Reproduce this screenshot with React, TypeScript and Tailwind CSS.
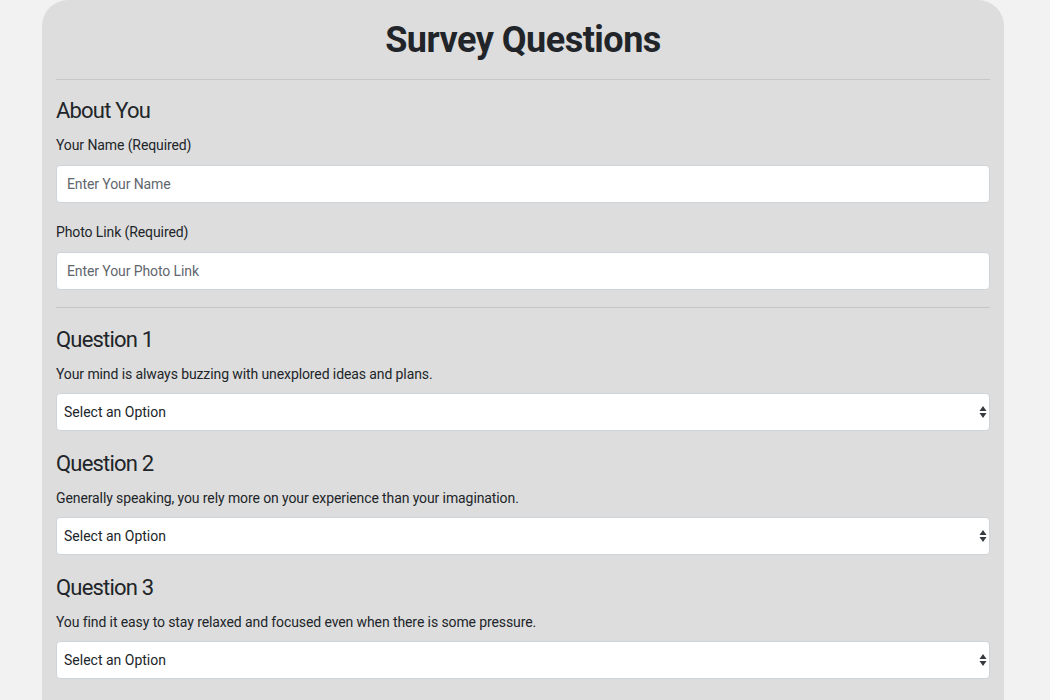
import React from "react";

const questions = [
  { title: "Question 1", text: "Your mind is always buzzing with unexplored ideas and plans." },
  { title: "Question 2", text: "Generally speaking, you rely more on your experience than your imagination." },
  { title: "Question 3", text: "You find it easy to stay relaxed and focused even when there is some pressure." },
];

function SelectArrows() {
  return (
    <svg width="8" height="14" viewBox="0 0 8 14" className="shrink-0">
      <path d="M4 1 L7.5 6 L0.5 6 Z" fill="#343a40" />
      <path d="M4 13 L7.5 8 L0.5 8 Z" fill="#343a40" />
    </svg>
  );
}

export default function App() {
  return (
    <div className="h-[700px] overflow-hidden bg-[#f2f2f2] font-['Roboto',sans-serif] text-[#212529]">
      <div className="ml-[42px] w-[962px] rounded-[26px] bg-[#dddddd] px-[14px] pb-16">
        <h1 className="flex h-[79px] items-center justify-center text-[36px] font-bold tracking-[-0.5px]">
          Survey Questions
        </h1>
        <div className="border-t border-[#c6c6c6]" />

        <h2 className="mt-[17px] text-[22px] leading-[28px] tracking-[-0.8px]">About You</h2>
        <label className="mt-[10px] block text-[14px] leading-[20px] tracking-[-0.1px]">Your Name (Required)</label>
        <input
          placeholder="Enter Your Name"
          className="mt-[10px] block h-[38px] w-full rounded-[4px] border border-[#ced4da] bg-white px-[10px] text-[14px] tracking-[-0.1px] placeholder:text-[#5f666d] outline-none"
        />
        <label className="mt-[19px] block text-[14px] leading-[20px] tracking-[-0.1px]">Photo Link (Required)</label>
        <input
          placeholder="Enter Your Photo Link"
          className="mt-[10px] block h-[38px] w-full rounded-[4px] border border-[#ced4da] bg-white px-[10px] text-[14px] tracking-[-0.1px] placeholder:text-[#5f666d] outline-none"
        />
        <div className="mt-[17px] border-t border-[#c6c6c6]" />

        <div className="mt-[18px] flex flex-col gap-[19px]">
          {questions.map((q) => (
            <div key={q.title}>
              <h3 className="text-[22px] leading-[28px] tracking-[-0.8px]">{q.title}</h3>
              <p className="mt-[10px] text-[14px] leading-[20px] tracking-[-0.1px]">{q.text}</p>
              <div className="mt-[9px] flex h-[38px] items-center justify-between rounded-[4px] border border-[#ced4da] bg-white pl-[7px] pr-[2px]">
                <span className="text-[14px] tracking-[0px] text-[#212529]">Select an Option</span>
                <SelectArrows />
              </div>
            </div>
          ))}
        </div>
      </div>
    </div>
  );
}
